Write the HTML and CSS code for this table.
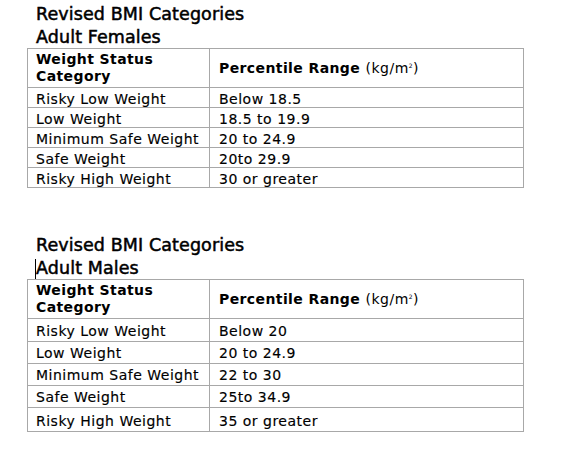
FILE: index.html
```html
<!DOCTYPE html>
<html>
<head>
<meta charset="utf-8">
<link rel="stylesheet" href="styles.css">
</head>
<body>
<div class="page">
  <section class="block first">
    <h2 class="title">Revised BMI Categories<br>Adult Females</h2>
    <table class="bmi t1">
      <tr class="head">
        <th class="c1">Weight Status<br>Category</th>
        <th class="c2">Percentile Range <span class="unit">(kg/m<sup>2</sup>)</span></th>
      </tr>
      <tr><td>Risky Low Weight</td><td>Below 18.5</td></tr>
      <tr><td>Low Weight</td><td>18.5 to 19.9</td></tr>
      <tr><td>Minimum Safe Weight</td><td>20 to 24.9</td></tr>
      <tr><td>Safe Weight</td><td>20to 29.9</td></tr>
      <tr><td>Risky High Weight</td><td>30 or greater</td></tr>
    </table>
  </section>
  <section class="block second">
    <h2 class="title">Revised BMI Categories<br><span class="caret"></span>Adult Males</h2>
    <table class="bmi t2">
      <tr class="head">
        <th class="c1">Weight Status<br>Category</th>
        <th class="c2">Percentile Range <span class="unit">(kg/m<sup>2</sup>)</span></th>
      </tr>
      <tr><td>Risky Low Weight</td><td>Below 20</td></tr>
      <tr><td>Low Weight</td><td>20 to 24.9</td></tr>
      <tr><td>Minimum Safe Weight</td><td>22 to 30</td></tr>
      <tr><td>Safe Weight</td><td>25to 34.9</td></tr>
      <tr><td>Risky High Weight</td><td>35 or greater</td></tr>
    </table>
  </section>
</div>
</body>
</html>
```

FILE: styles.css
```css
html, body {
  margin: 0;
  padding: 0;
  background: #fff;
}
body {
  font-family: "DejaVu Sans", Verdana, sans-serif;
  color: #000;
}
.page {
  padding: 3px 0 0 27px;
  width: 497px;
}
.title {
  margin: 0;
  padding-left: 9px;
  font-size: 17.5px;
  font-weight: normal;
  line-height: 22.5px;
  letter-spacing: 0.1px;
  -webkit-text-stroke: 0.5px #000;
}
.caret {
  display: inline-block;
  width: 0;
  height: 20px;
  border-left: 1px solid #000;
  vertical-align: -5px;
  margin-left: -1px;
  -webkit-text-stroke: 0;
}
.second {
  margin-top: 46px;
}
.bmi {
  width: 497px;
  border-collapse: collapse;
  font-size: 14px;
  letter-spacing: 0.5px;
}
.bmi td {
  -webkit-text-stroke: 0.15px #000;
}
.bmi th, .bmi td {
  border: 1px solid #a8a8a8;
  padding: 0 0 0 8px;
  text-align: left;
  vertical-align: bottom;
  line-height: 16px;
}
.bmi .head th {
  height: 36px;
  line-height: 17px;
  letter-spacing: 0.4px;
}
.bmi th.c1 {
  width: 173px;
  padding-bottom: 2px;
}
.bmi th.c2 {
  padding-left: 9px;
  vertical-align: middle;
}
.bmi td + td {
  padding-left: 9px;
}
.unit {
  font-weight: normal;
  letter-spacing: 0.5px;
}
.unit sup {
  font-size: 6px;
  line-height: 0;
  vertical-align: 5px;
}
.t1 td {
  height: 19px;
}
.t2 td {
  height: 19px;
  padding-bottom: 2px;
}
.t2 tr:nth-child(2) td {
  height: 20px;
}
.t2 tr:nth-child(6) td {
  height: 21px;
}
```
